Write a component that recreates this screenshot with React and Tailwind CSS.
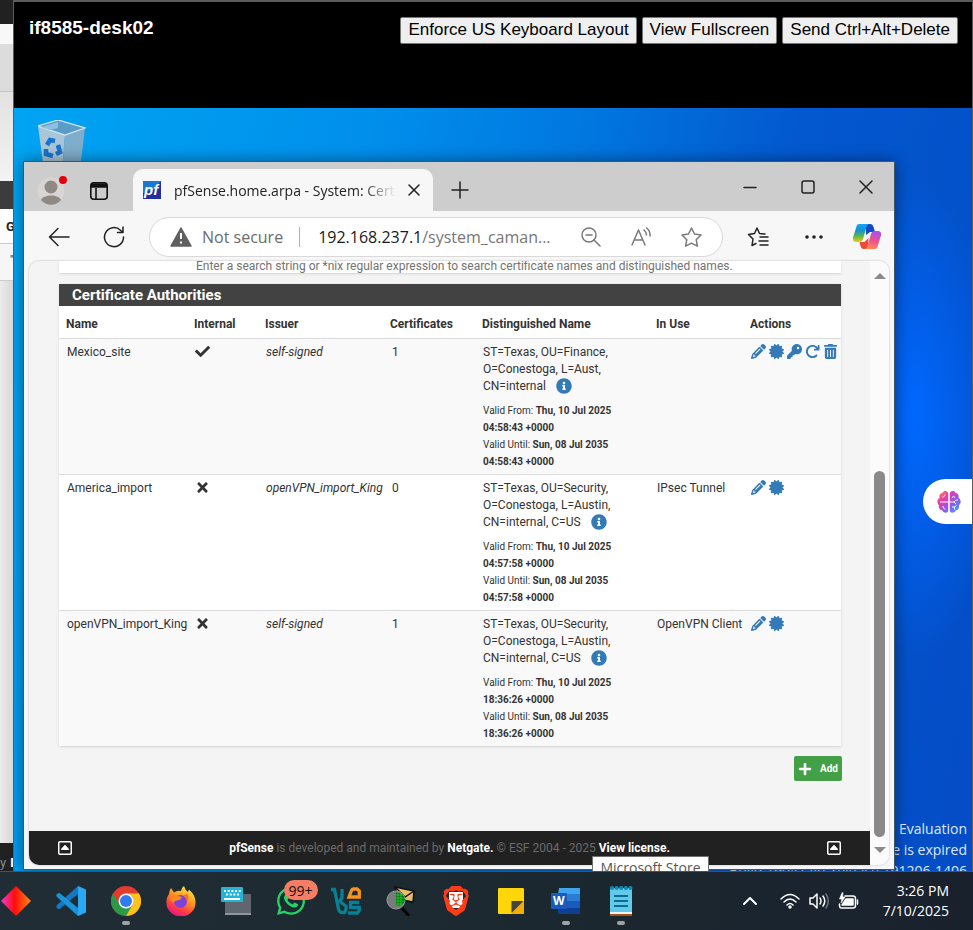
import React from "react";
import {
  FaPencil, FaCertificate, FaKey, FaArrowRotateRight, FaTrashCan, FaRegSquareCaretUp, FaWhatsapp,
} from "react-icons/fa6";
import { FaCheck, FaTimes, FaPlus, FaInfoCircle } from "react-icons/fa";
import { SiBrave } from "react-icons/si";

const authorities = [
  {
    name: "Mexico_site", internal: true, issuer: "self-signed", count: 1,
    dn: ["ST=Texas, OU=Finance,", "O=Conestoga, L=Aust,", "CN=internal"],
    from: ["Thu, 10 Jul 2025", "04:58:43 +0000"], until: ["Sun, 08 Jul 2035", "04:58:43 +0000"],
    use: "", full: true,
  },
  {
    name: "America_import", internal: false, issuer: "openVPN_import_King", count: 0,
    dn: ["ST=Texas, OU=Security,", "O=Conestoga, L=Austin,", "CN=internal, C=US"],
    from: ["Thu, 10 Jul 2025", "04:57:58 +0000"], until: ["Sun, 08 Jul 2035", "04:57:58 +0000"],
    use: "IPsec Tunnel", full: false,
  },
  {
    name: "openVPN_import_King", internal: false, issuer: "self-signed", count: 1,
    dn: ["ST=Texas, OU=Security,", "O=Conestoga, L=Austin,", "CN=internal, C=US"],
    from: ["Thu, 10 Jul 2025", "18:36:26 +0000"], until: ["Sun, 08 Jul 2035", "18:36:26 +0000"],
    use: "OpenVPN Client", full: false,
  },
];

function PageBehind() {
  return (
    <aside className="flex w-[13px] shrink-0 flex-col overflow-hidden bg-[#e6e6e6] font-['Roboto',sans-serif] text-[13px] text-[#222]">
      <div className="h-6 shrink-0 bg-[#212121]" />
      <div className="h-5 shrink-0 bg-[#f8f8f8]" />
      <div className="h-12 shrink-0 border-b border-[#c4c4c4] bg-[#dcdcdc]" />
      <div className="h-[89px] shrink-0 bg-gradient-to-b from-[#e2e2e2] to-[#f3f3f3]" />
      <div className="h-7 shrink-0 bg-[#3c3c3c]" />
      <div className="h-[35px] shrink-0 border-b border-[#ccc] bg-white pt-2 pl-[6px] font-bold">G</div>
      <div className="h-[37px] shrink-0 border-b border-[#ccc] bg-[#f6f6f6] pt-2 pl-[10px] text-[10px]">"</div>
      <div className="grow bg-gradient-to-r from-[#ececec] to-[#d8d8d8]" />
      <div className="flex h-7 shrink-0 items-center gap-1 bg-[#212121] pt-3 text-[#8a8a8a]">
        <span>y</span><span className="font-bold text-white">N</span>
      </div>
    </aside>
  );
}

function RecycleBin() {
  return (
    <svg width="48" height="50" viewBox="0 0 48 50" aria-label="Recycle Bin">
      <path d="M0 6 27 15 24 50H6Z" fill="#a9c6d9" />
      <path d="M27 15 47 8 42 50H24Z" fill="#7fadcb" />
      <path d="M0 6 20 0 47 8 27 15Z" fill="#5a9cc7" stroke="#d5e6f1" strokeWidth="1.3" />
      <path d="M3 7 20 2 20 8 12 10Z" fill="#8dc0de" />
      <g fill="none" stroke="#1873cf" strokeWidth="4.6">
        <path d="M9 25 12 20 17 21" /><path d="M20 25 22 32 18 34" /><path d="M15 36 8 34 8 29" />
      </g>
    </svg>
  );
}

function PfLogo() {
  return (
    <svg width="18" height="18" viewBox="0 0 18 18">
      <path d="M0 0H18V18H0Z" fill="#21309b" />
      <path d="M0 0H18L12 8 0 12Z" fill="#1a78d4" />
      <text x="1" y="14" fill="#fff" fontSize="15" fontWeight="bold" fontStyle="italic" fontFamily="Liberation Sans, sans-serif">pf</text>
    </svg>
  );
}

function Copilot() {
  return (
    <svg width="28" height="26" viewBox="0 0 28 26">
      <defs>
        <linearGradient id="cpA" x1="0" y1="0" x2="0" y2="1">
          <stop offset="0" stopColor="#18a7f0" /><stop offset=".35" stopColor="#1592d8" />
          <stop offset=".65" stopColor="#52b553" /><stop offset="1" stopColor="#f4c80c" />
        </linearGradient>
        <linearGradient id="cpB" x1="0.6" y1="0" x2=".4" y2="1">
          <stop offset="0" stopColor="#a552ee" /><stop offset=".5" stopColor="#ec4f92" /><stop offset="1" stopColor="#fb8b52" />
        </linearGradient>
      </defs>
      <path d="M13 0h4c2 0 3 1 3.500 3l1.500 5h-5l-4 3Z" fill="#1648c2" />
      <path d="M6 0h11c-2 0-3 1-3.500 3L10 15c-.6 2-2 3-4 3H3c-2.500 0-3.500-2-3-4.500L3 4C3.500 1.500 4.500 0 6 0Z" fill="url(#cpA)" />
      <path d="M15 25h-4c-2 0-3-1-3.500-3L6.500 18h5l4-4Z" fill="#ee4a36" />
      <path d="M22 25H11c2 0 3-1 3.500-3L18 10c.6-2 2-3 4-3h3c2.500 0 3.500 2 3 4.500L25 21c-.5 2.500-1.500 4-3 4Z" fill="url(#cpB)" />
    </svg>
  );
}

function BrainIcon() {
  return (
    <svg width="24" height="24" viewBox="0 0 24 24">
      <defs>
        <linearGradient id="br" x1="0" y1="0" x2="1" y2="1">
          <stop offset="0" stopColor="#ff9d2e" /><stop offset=".3" stopColor="#ee3aa8" />
          <stop offset=".6" stopColor="#9156f0" /><stop offset="1" stopColor="#24b4fb" />
        </linearGradient>
      </defs>
      <path fill="url(#br)" d="M11.200 3.500C11 .5 6.500 0 5.500 3 3 3 1.800 5.500 2.500 8 0 9-.5 13.500 2 15c-.6 3 1 5.500 3.500 5.500C6.500 23.500 11 23.500 11.200 20.500ZM12.800 3.500C13 .5 17.500 0 18.500 3 21 3 22.200 5.500 21.500 8 24 9 24.500 13.500 22 15c.6 3-1 5.500-3.500 5.500C17.500 23.500 13 23.500 12.800 20.500Z" />
      <g fill="none" stroke="#fff" strokeWidth="1">
        <path d="M3 12h8M5.500 7c1.500 0 2.500-1 2.500-2.500M6 16c0 2 1 3 2.500 3M13 12h4l2-2h2M17 12l2 2M15 8l1.500-2L18 8M15 17h2.500l2-1.500M17.500 17v2.500" />
      </g>
    </svg>
  );
}

const stroke = { fill: "none", stroke: "currentColor", strokeWidth: 1.5, strokeLinecap: "round", strokeLinejoin: "round" };
const star = "M10.500 1 13.500 7 20 8 15.200 12.700 16.400 19.200 10.500 16.100 4.600 19.200 5.800 12.700 1 8 7.500 7Z";

function TabStrip() {
  return (
    <div className="flex h-[49px] shrink-0 items-end bg-[#cdcdcd] font-['Open_Sans',sans-serif]">
      <div className="flex h-full w-[109px] items-center gap-[25px] rounded-br-[10px] pt-2 pl-[13px]">
        <button aria-label="Profile" className="relative">
          <svg width="28" height="28" viewBox="0 0 28 28">
            <circle cx="14" cy="14" r="13.500" fill="#d8d5d2" />
            <circle cx="14" cy="10" r="6.500" fill="#8f8a86" />
            <path d="M4 23C6 17 22 17 24 23a13 13 0 0 1-20 0Z" fill="#8f8a86" />
          </svg>
          <span className="absolute -top-px right-[-2px] size-2 rounded-full bg-[#e3000f]" />
        </button>
        <button aria-label="Tab actions">
          <svg width="18" height="18" viewBox="0 0 18 18" fill="none" stroke="#111" strokeWidth="1.600">
            <rect x=".8" y=".8" width="16.400" height="16.400" rx="3" /><path d="M1 3.500h16" strokeWidth="4.500" /><path d="M6 6v11" />
          </svg>
        </button>
      </div>
      <div className="flex h-[42px] w-[300px] items-center rounded-t-[10px] bg-[#f7f7f7] pl-[10px]">
        <PfLogo />
        <span className="ml-[13px] w-[222px] overflow-hidden mask-r-from-85% text-[14px] whitespace-nowrap text-[#222]">pfSense.home.arpa - System: Certificate</span>
        <button aria-label="Close tab" className="ml-3 text-[#222]">
          <svg width="12" height="12" viewBox="0 0 12 12" {...stroke}><path d="M1 1 11 11M11 1 1 11" /></svg>
        </button>
      </div>
      <button aria-label="New tab" className="mb-3 ml-[18px] text-[#222]">
        <svg width="18" height="18" viewBox="0 0 18 18" {...stroke}><path d="M9 1V17M1 9H17" /></svg>
      </button>
      <div className="mr-[21px] mb-[17px] ml-auto flex items-center gap-11 text-[#222]">
        <button aria-label="Minimize"><svg width="14" height="14" viewBox="0 0 14 14" {...stroke}><path d="M1 7.500H13" /></svg></button>
        <button aria-label="Maximize"><svg width="14" height="14" viewBox="0 0 14 14" {...stroke}><rect x="1" y="1" width="12" height="12" rx="2" /></svg></button>
        <button aria-label="Close"><svg width="14" height="14" viewBox="0 0 14 14" {...stroke}><path d="M1 1 13 13M13 1 1 13" /></svg></button>
      </div>
    </div>
  );
}

function Toolbar() {
  return (
    <div className="flex h-[50px] shrink-0 items-center bg-[#f7f7f7] pt-px text-[#222]">
      <button aria-label="Back" className="ml-6"><svg width="22" height="20" viewBox="0 0 22 20" {...stroke}><path d="M10 1.500 1.500 10 10 18.500M1.500 10H21" /></svg></button>
      <button aria-label="Refresh" className="ml-8">
        <svg width="24" height="24" viewBox="0 0 24 24" {...stroke}><path d="M21.500 12A9.500 9.500 0 1 1 18.500 5.200L21 7.500M21 2V7.500H15.500" /></svg>
      </button>
      <div className="ml-[23px] flex h-10 min-w-0 flex-1 items-center rounded-full border border-[#d9d9d9] bg-white font-['Open_Sans',sans-serif] text-[16px]">
        <svg className="ml-5 shrink-0" width="22" height="20" viewBox="0 0 22 20"><path d="M11 1 21 19H1Z" fill="#606060" stroke="#606060" strokeWidth="1.500" strokeLinejoin="round" /><path d="M11 6v6M11 14.500v2" stroke="#fff" strokeWidth="2" /></svg>
        <span className="ml-[10px] shrink-0 text-[#6b6b6b]">Not secure</span>
        <span className="ml-4 h-5 w-px shrink-0 bg-[#b0b0b0]" />
        <label htmlFor="url" className="ml-[18px] shrink-0 text-[#1a1a1a]">192.168.237.1</label>
        <input id="url" defaultValue="/system_caman..." className="w-[150px] min-w-0 shrink bg-transparent text-[#767676] outline-none" />
        <div className="mr-5 ml-auto flex shrink-0 items-center gap-[30px] text-[#7a7a7a]">
          <button aria-label="Zoom out"><svg width="20" height="20" viewBox="0 0 20 20" {...stroke}><circle cx="8" cy="8" r="7" /><path d="M5 8h6M13 13l6 6" /></svg></button>
          <button aria-label="Read aloud"><svg width="20" height="20" viewBox="0 0 20 20" {...stroke}><path d="M1 18 7.500 3 14 18M3.500 13h8M13 3q2.500 2 2.500 5M15.500 1q4 3 3.500 8" /></svg></button>
          <button aria-label="Favorite"><svg width="21" height="20" viewBox="0 0 21 20" {...stroke}><path d={star} /></svg></button>
        </div>
      </div>
      <button aria-label="Favorites" className="ml-6">
        <svg width="22" height="20" viewBox="0 0 22 20" {...stroke}><path d="M18 7 12.500 6.500 10 1 7.500 6.500 1.500 7.500 6 12 5 18.500 9 16.500M13 10h8M12 14h9M13 18h8" /></svg>
      </button>
      <button aria-label="Settings and more" className="ml-9"><svg width="18" height="4" viewBox="0 0 18 4" fill="currentColor"><circle cx="2" cy="2" r="1.800" /><circle cx="9" cy="2" r="1.800" /><circle cx="16" cy="2" r="1.800" /></svg></button>
      <button aria-label="Copilot" className="mr-[13px] ml-[30px]"><Copilot /></button>
    </div>
  );
}

function AuthorityRow({ a }) {
  return (
    <tr className="h-[136px] border-t border-[#ddd] align-top leading-[17px] odd:bg-[#f9f9f9] *:pt-[5px] *:pl-2">
      <td>{a.name}</td>
      <td className="text-[15px]">{a.internal ? <FaCheck /> : <FaTimes />}</td>
      <td className="italic">{a.issuer}</td>
      <td className="!pl-[9px]">{a.count}</td>
      <td className="pb-1">
        {a.dn[0]}<br />{a.dn[1]}<br />
        <span className="flex h-[17px] items-center gap-[10px]">{a.dn[2]}<FaInfoCircle className="size-4 text-[#337ab7]" /></span>
        <p className="mt-[7px] text-[10px]">
          Valid From: <b>{a.from[0]}<br />{a.from[1]}</b><br />
          Valid Until: <b>{a.until[0]}<br />{a.until[1]}</b>
        </p>
      </td>
      <td>{a.use}</td>
      <td>
        <div className="flex gap-[3px] text-[15px] text-[#337ab7]">
          <a href="#edit" aria-label="Edit"><FaPencil /></a>
          <a href="#cert" aria-label="Export certificate"><FaCertificate /></a>
          {a.full && (
            <>
              <a href="#key" aria-label="Export key"><FaKey /></a>
              <a href="#renew" aria-label="Renew"><FaArrowRotateRight /></a>
              <a href="#delete" aria-label="Delete"><FaTrashCan /></a>
            </>
          )}
        </div>
      </td>
    </tr>
  );
}

function PfSensePage() {
  return (
    <div className="flex min-w-0 flex-1 flex-col bg-[#f4f4f4] font-['Roboto',sans-serif] text-[12px] text-[#333]">
      <div className="mr-[29px] ml-[30px] h-3 shrink-0 overflow-hidden bg-white shadow">
        <p className="-mt-[2px] pl-[137px] leading-[14px] text-[#737373]">Enter a search string or *nix regular expression to search certificate names and distinguished names.</p>
      </div>
      <section className="mt-[11px] mr-[29px] ml-[30px] bg-white shadow">
        <h2 className="h-[22px] bg-[#424242] pl-[13px] text-[15px] leading-[22px] font-bold text-white">Certificate Authorities</h2>
        <table className="w-full table-fixed border-collapse">
          <colgroup>
            <col className="w-[128px]" /><col className="w-[71px]" /><col className="w-[125px]" /><col className="w-[92px]" />
            <col className="w-[174px]" /><col className="w-[94px]" /><col />
          </colgroup>
          <thead>
            <tr className="h-8 text-left *:pt-1 *:pl-[7px]">
              {["Name", "Internal", "Issuer", "Certificates", "Distinguished Name", "In Use", "Actions"].map((h) => <th key={h}>{h}</th>)}
            </tr>
          </thead>
          <tbody>{authorities.map((a) => <AuthorityRow key={a.name} a={a} />)}</tbody>
        </table>
      </section>
      <button className="mt-[10px] mr-7 flex h-[25px] w-12 items-center justify-between self-end rounded-[2px] bg-[#43a047] px-1 text-[10px] font-bold text-white">
        <FaPlus className="size-[14px]" />Add
      </button>
      <footer className="mt-auto flex h-[34px] items-center bg-[#212121] px-7 text-[#6b6b6b]">
        <FaRegSquareCaretUp className="size-4 text-white" />
        <p className="flex-1 text-center">
          <b className="text-white">pfSense</b> is developed and maintained by <b className="text-white">Netgate.</b> © ESF 2004 - 2025 <a href="#license" className="font-bold text-white">View license.</a>
        </p>
        <FaRegSquareCaretUp className="size-4 text-white" />
      </footer>
    </div>
  );
}

function BrowserWindow() {
  return (
    <div className="absolute top-[53px] right-[77px] bottom-px left-[9px] flex flex-col border border-[#3d566b] bg-[#f7f7f7] shadow-[0_0_14px_rgba(0,0,0,0.45)]">
      <TabStrip />
      <Toolbar />
      <div className="mr-[5px] mb-1 ml-[5px] flex min-h-0 flex-1 overflow-hidden rounded-[10px] shadow-[0_0_2px_rgba(0,0,0,0.3)]">
        <PfSensePage />
        <div className="flex w-[19px] shrink-0 flex-col items-center bg-[#fbfbfb] py-3">
          <span className="border-x-[6px] border-b-[6px] border-x-transparent border-b-[#8a8a8a]" />
          <span className="mt-auto h-[366px] w-[11px] rounded-full bg-[#8a8a8a]" />
          <span className="mt-[10px] border-x-[6px] border-t-[6px] border-x-transparent border-t-[#8a8a8a]" />
        </div>
      </div>
    </div>
  );
}

function RemoteSession() {
  const btn = "h-[27px] rounded-[2px] border border-[#767676] bg-[#efefef] px-[7px] text-[17px] leading-[22px] text-black pb-[2px]";
  return (
    <main className="flex min-w-0 flex-1 flex-col border-t-2 border-r border-l border-[#5c5c5c] bg-black font-['Liberation_Sans',sans-serif]">
      <header className="flex h-[106px] shrink-0 items-start justify-between pt-[15px] pr-[14px] pl-[15px]">
        <h1 className="text-[19px] leading-[22px] font-bold text-white">if8585-desk02</h1>
        <div className="flex gap-[5px]">
          <button className={btn}>Enforce US Keyboard Layout</button>
          <button className={btn}>View Fullscreen</button>
          <button className={btn}>Send Ctrl+Alt+Delete</button>
        </div>
      </header>
      <div className="relative min-h-0 flex-1 overflow-hidden bg-[radial-gradient(ellipse_90px_240px_at_900px_310px,#0068ff,transparent),linear-gradient(100deg,#00a4f2_0%,#0090ec_32%,#0078e0_52%,#0358cf_72%,#044cc6_100%)]">
        <div className="absolute top-3 left-6"><RecycleBin /></div>
        <div className="absolute right-[5px] -bottom-[10px] text-right font-['Open_Sans',sans-serif] text-[14px] leading-[21px] whitespace-nowrap text-[#dfe9fb]">
          <p>Windows 10 Enterprise Evaluation</p>
          <p>Windows License is expired</p>
          <p>Build 19041.vb_release.191206-1406</p>
        </div>
        <BrowserWindow />
        <div className="absolute bottom-[-8px] left-[578px] h-[23px] w-[117px] border border-[#707070] bg-white text-center font-['Open_Sans',sans-serif] text-[14px] leading-[21px] whitespace-nowrap text-[#575757]">Microsoft Store</div>
        <button aria-label="Assistant" className="absolute top-[371px] right-0 h-[45px] w-[49px] rounded-l-full bg-white pl-[14px]"><BrainIcon /></button>
      </div>
    </main>
  );
}

const icons = [
  ["Git", <svg width="30" height="30" viewBox="0 0 30 30"><defs><linearGradient id="dm"><stop offset="0" stopColor="#f03bd0" /><stop offset=".45" stopColor="#ff0c0c" /><stop offset="1" stopColor="#ff8a12" /></linearGradient></defs><path d="M15 0 30 15 15 30 0 15Z" fill="url(#dm)" /></svg>],
  ["Visual Studio Code", <svg width="30" height="30" viewBox="0 0 30 30"><path d="M22 0 30 3.500V26.500L22 30Z" fill="#2aa9f2" /><path d="M22 0V8L3.500 23Q2 23.500.5 21.500 0 20 1 19Z" fill="#1279c4" /><path d="M22 30V22L3.500 7Q2 6.500.5 8.500 0 10 1 11Z" fill="#1a93dd" /></svg>],
  ["Chrome", <svg width="30" height="30" viewBox="0 0 30 30"><circle cx="15" cy="15" r="15" fill="#e33b2e" /><path d="M2 7.500A15 15 0 0 0 15 30L21.500 18.800 15 22 8.500 18.800Z" fill="#2b9a47" /><path d="M28 7.500A15 15 0 0 1 15 30L21.500 18.800 21.500 11 15 7.500Z" fill="#fcc31e" /><circle cx="15" cy="15" r="7.500" fill="#fff" /><circle cx="15" cy="15" r="6" fill="#2f7cf0" /></svg>],
  ["Firefox", <svg width="30" height="30" viewBox="0 0 30 30"><defs><linearGradient id="ff" x1=".8" y1="0" x2=".3" y2="1"><stop offset="0" stopColor="#fff04a" /><stop offset=".4" stopColor="#ff9a20" /><stop offset=".75" stopColor="#ff3b47" /><stop offset="1" stopColor="#e0128a" /></linearGradient></defs><path d="M5 2 8 6.500Q11 4 15 5 15 2 18 0 19 4 22 6 22 4 23.500 4 30 10 29.500 17A14.500 13.500 0 0 1 .5 17Q0 12 3 8 3.500 4 5 2Z" fill="url(#ff)" /><circle cx="14.500" cy="15.500" r="6.500" fill="#7a42df" /><path d="M5 10Q9 8 12 10L16 11Q15 14 11 14.500 8 15 8 17 3 15 5 10Z" fill="#ff8a1c" /><path d="M17 9.500Q21 11 21 16 24 12 21 8Z" fill="#ff6a2e" /></svg>],
  ["On-Screen Keyboard", <svg width="30" height="28" viewBox="0 0 30 28"><rect x="4" y="7" width="26" height="21" rx="1" fill="#5f666d" /><path d="M4 26h26v2H4Z" fill="#8f979e" /><rect width="22" height="15" rx="1" fill="#22b5d8" /><path d="M3 4H20M5 7.500H18" stroke="#fff" strokeWidth="1.800" strokeDasharray="2 1.700" /><path d="M3 12H19" stroke="#fff" strokeWidth="2" /></svg>],
  ["WhatsApp", <span className="relative block"><FaWhatsapp className="size-8 text-[#25d366]" /><span className="absolute -top-[5px] left-[9px] flex h-5 w-[34px] items-center justify-center rounded-full bg-[#f47d65] text-[14px] text-[#111]">99+</span></span>],
  ["Cloud Desktop", <svg width="30" height="28" viewBox="0 0 30 28" fill="none" strokeWidth="3.300"><path d="M0 2.500H3.500L7.500 22Q8.500 25.500 11 25.500H13.500L15 22.500V19L10 15.500 9 13.500 11 11V2" stroke="#087f93" /><path d="M28.300 15.500H19.500V20.500H28.300V23.500L26.500 26H17" stroke="#087f93" /><path d="M18 10 20.500 3.500Q21 2 22.500 2H26L28.300 4V10Z" stroke="#f7941d" /></svg>],
  ["Mail Analyzer", <svg width="30" height="30" viewBox="0 0 30 30"><path d="M9 1 28 5 27 16 12 13Z" fill="#e6c06b" stroke="#111" strokeWidth="1.500" /><path d="M9 1 19 11 28 5" fill="none" stroke="#111" strokeWidth="1.500" /><circle cx="10" cy="14" r="9" fill="#777b7c" stroke="#9a9d9d" /><path d="M10 6.500Q18 7 19 14 17 21 10 19Z" fill="#0b6b12" /><path d="M10 9H18M10 12H19M10 15H19M10 18H17M12 7V19M15 7V19" stroke="#21d52d" strokeWidth=".8" /><path d="M16 22 23 30" stroke="#050505" strokeWidth="3" /></svg>],
  ["Brave", <span className="relative block"><span className="absolute inset-x-2 top-[6px] bottom-2 bg-white" /><SiBrave className="relative size-[30px] text-[#fb3c17]" /></span>],
  ["Sticky Notes", <svg width="26" height="26" viewBox="0 0 26 26"><rect width="26" height="26" rx="1" fill="#ffd60a" /><path d="M14 26V14H26V25L25 26Z" fill="#f2ad0c" /><path d="M13.500 25V13H25.500Z" fill="#444" /></svg>],
  ["Word", <svg width="30" height="28" viewBox="0 0 30 28"><path d="M8 1h21v7H7Z" fill="#41a5ee" /><path d="M7 7h22v7H7Z" fill="#2b7cd3" /><path d="M7 14h22v7H7Z" fill="#185abd" /><path d="M7 21h22v5.500l-1 .5H7Z" fill="#103f91" /><rect y="6" width="16" height="16" rx="1" fill="#185abd" /><text x="2" y="18" fill="#fff" fontSize="12" fontWeight="bold" fontFamily="Open Sans, sans-serif">W</text></svg>],
  ["Notepad", <svg width="24" height="30" viewBox="0 0 24 30"><rect x="1" y="2" width="22" height="27" rx="1" fill="#62c9e8" /><path d="M1 26h22v2H1Z" fill="#f2f2f2" /><path d="M1 28h22v2H1Z" fill="#a0521f" /><path d="M5 10H19M5 15H19M5 20H19" stroke="#0c6d93" strokeWidth="1.800" /><path d="M3 2H22" stroke="#0b8db3" strokeWidth="4" strokeLinecap="round" strokeDasharray=".1 4.500" /></svg>],
];
const running = ["Chrome", "Word", "Notepad"];

function Taskbar() {
  return (
    <nav className="flex h-[59px] shrink-0 items-center justify-between border-t border-[#4b5054] bg-gradient-to-r from-[#202d34] via-[#1c2930] to-[#19212d] font-['Open_Sans',sans-serif] text-white">
      <div className="-ml-3 flex h-full shrink-0">
        {icons.map(([name, icon]) => (
          <button key={name} aria-label={name} className="flex w-[55px] flex-col items-center">
            <span className="flex h-[49px] items-center pt-[9px]">{icon}</span>
            {running.includes(name) && <span className="h-1 w-2 rounded-full bg-[#a0a3a5]" />}
          </button>
        ))}
      </div>
      <div className="flex shrink-0 items-center pr-6">
        <button aria-label="Show hidden icons"><svg width="14" height="10" viewBox="0 0 14 10" {...stroke} strokeWidth="2"><path d="M1 8 7 2 13 8" /></svg></button>
        <button aria-label="Quick settings" className="ml-[23px] flex items-center gap-[9px]">
          <svg width="20" height="16" viewBox="0 0 20 16" {...stroke}><path d="M1 6Q10-3 19 6M4 9Q10 3 16 9M7 12Q10 9 13 12" /><circle cx="10" cy="14" r="1" fill="#fff" /></svg>
          <svg width="20" height="16" viewBox="0 0 20 16" {...stroke}><path d="M1 5H4L8 1V15L4 11H1ZM11 5Q13 8 11 11M14 3Q17.500 8 14 13" /><path d="M17 1Q21.500 8 17 15" stroke="#69717a" /></svg>
          <svg width="21" height="18" viewBox="0 0 21 18" {...stroke}><path d="M7 4H15Q17.500 4 17.500 6.500V13.500Q17.500 16 15 16H3.500Q1.500 16 1.500 13.500V12" /><path d="M8 7H15V13H4Z" fill="#fff" /><path d="M19.500 8V12" /><path d="M4 1 1.500 7H4L3 11 7 5H4.500L5 1Z" fill="#fff" strokeWidth=".7" /></svg>
        </button>
        <div className="ml-6 text-right text-[14px] leading-5"><p>3:26 PM</p><p>7/10/2025</p></div>
      </div>
    </nav>
  );
}

export default function App() {
  return (
    <div className="flex h-screen flex-col overflow-hidden bg-black">
      <div className="flex min-h-0 flex-1">
        <PageBehind />
        <RemoteSession />
      </div>
      <Taskbar />
    </div>
  );
}
